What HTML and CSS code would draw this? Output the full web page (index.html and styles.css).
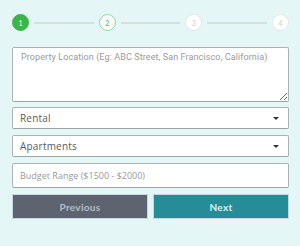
FILE: index.html
```html
<!DOCTYPE html>
<html lang="en">
<head>
  <meta charset="UTF-8" />
  <title>Property Request</title>
  <meta name="viewport" content="width=device-width, initial-scale=1.0" />
  <link rel="stylesheet" href="styles.css">
</head>
<body>

  <!-- Steps -->
  <div class="steps">
    <span class="step done">1</span>
    <span class="step-line"></span>
    <span class="step current">2</span>
    <span class="step-line"></span>
    <span class="step">3</span>
    <span class="step-line"></span>
    <span class="step">4</span>
  </div>

  <form class="form">
    <textarea class="field area" placeholder="Property Location (Eg: ABC Street, San Francisco, California)"></textarea>

    <div class="select-wrap">
      <select class="field pick">
        <option>Rental</option>
        <option>Sale</option>
      </select>
    </div>

    <div class="select-wrap">
      <select class="field pick">
        <option>Apartments</option>
        <option>Houses</option>
      </select>
    </div>

    <input class="field text" type="text" placeholder="Budget Range ($1500 - $2000)" />

    <div class="actions">
      <button type="button" class="btn prev">Previous</button>
      <button type="button" class="btn next">Next</button>
    </div>
  </form>

</body>
</html>
```

FILE: styles.css
```css
* { box-sizing: border-box; margin: 0; padding: 0; }

body {
  background: #e4f6f6;
  font-family: 'Open Sans', sans-serif;
  padding: 14px 11px 0 12px;
}

/* Barra de passos */
.steps {
  display: flex;
  align-items: center;
}
.step {
  width: 17px;
  height: 17px;
  border-radius: 50%;
  border: 1px solid #e2e6e6;
  background: #fff;
  color: #d4d8d8;
  font-family: 'Lato', sans-serif;
  font-size: 7px;
  font-weight: bold;
  display: flex;
  align-items: center;
  justify-content: center;
  flex-shrink: 0;
}
.step.done {
  background: #39b54a;
  border-color: #39b54a;
  color: #c8efcd;
}
.step.current {
  background: #fafffb;
  border-color: #8fd99c;
  color: #6cc97b;
}
.step-line {
  flex: 1;
  height: 2px;
  background: #d6dfdf;
  margin: 0 5px;
}

.form {
  margin-top: 16px;
  display: flex;
  flex-direction: column;
}

.field {
  display: block;
  width: 100%;
  background: #fff;
  border: 1px solid #a9b3b5;
  border-bottom-color: #9aa4a6;
  border-radius: 2px;
  font-family: 'Open Sans', sans-serif;
  color: #555;
  outline: none;
}
.field::placeholder { color: #9a9a9a; }

.area {
  height: 55px;
  padding: 3px 8px;
  font-family: 'Roboto', sans-serif;
  font-size: 9px;
  letter-spacing: 0.1px;
  line-height: 13px;
  resize: vertical;
  margin-bottom: 5px;
}

.select-wrap {
  position: relative;
  margin-bottom: 6px;
}
.select-wrap::after {
  content: "";
  position: absolute;
  right: 10px;
  top: 10px;
  border-left: 3px solid transparent;
  border-right: 3px solid transparent;
  border-top: 3px solid #333;
}
.pick {
  -webkit-appearance: none;
  appearance: none;
  height: 22px;
  padding: 0 7px;
  font-size: 10px;
  letter-spacing: 0.2px;
  color: #5a5a5a;
}

.text {
  height: 25px;
  padding: 0 7px;
  font-size: 9px;
  margin-bottom: 6px;
}

.actions {
  display: flex;
  gap: 5px;
}
.btn {
  flex: 1;
  height: 25px;
  border: 1px solid #c8d8dc;
  font-family: 'Lato', sans-serif;
  font-size: 10px;
  font-weight: bold;
  letter-spacing: 0.3px;
  cursor: pointer;
}
.btn.prev {
  background: #5d6470;
  color: #b5bcc5;
}
.btn.next {
  background: #258c98;
  color: #dff2f3;
}
```
